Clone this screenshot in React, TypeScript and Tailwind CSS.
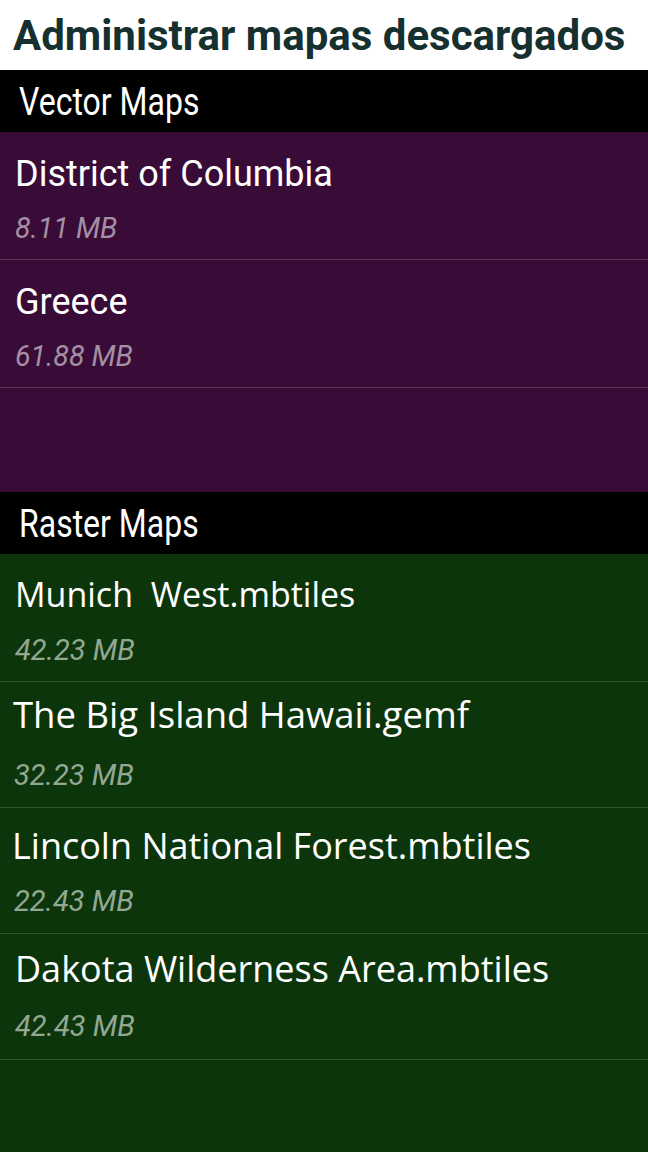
const vectorMaps = [
  { name: 'District of Columbia', size: '8.11 MB' },
  { name: 'Greece', size: '61.88 MB' },
];

// heights and offsets differ a little per row in the source screenshot
const rasterMaps = [
  { name: 'Munich  West.mbtiles', size: '42.23 MB', row: 'h-[128px] pl-[15px]', title: 'mt-[19px] text-[34px] leading-[42px]', sub: 'mt-[18px] pl-0' },
  { name: 'The Big Island Hawaii.gemf', size: '32.23 MB', row: 'h-[126px] pl-[13px]', title: 'mt-[10px] text-[36.5px] leading-[44px]', sub: 'mt-[22px] pl-[1px]' },
  { name: 'Lincoln National Forest.mbtiles', size: '22.43 MB', row: 'h-[126px] pl-[12px]', title: 'mt-[16px] text-[36px] leading-[44px]', sub: 'mt-[16px] pl-[2px]' },
  { name: 'Dakota Wilderness Area.mbtiles', size: '42.43 MB', row: 'h-[126px] pl-[15px]', title: 'mt-[13px] text-[36px] leading-[44px]', sub: 'mt-[18px] pl-0' },
];

function SectionHeader({ title }: { title: string }) {
  return (
    <div className="flex h-[62px] items-center bg-black pl-[19px] pt-[2px]">
      <span className="inline-block origin-left scale-y-[1.22] text-[32px] leading-[36px] text-white">
        {title}
      </span>
    </div>
  );
}

export default function App() {
  return (
    <div className="flex h-[1152px] w-[648px] flex-col overflow-hidden font-['Roboto',sans-serif]">
      <div className="flex h-[70px] items-center bg-white pl-[13px] pt-[2px]">
        <h1 className="text-[42px] font-bold leading-[48px] text-[#15302f]">
          Administrar mapas descargados
        </h1>
      </div>

      <SectionHeader title="Vector Maps" />
      <div className="h-[360px] bg-[#380c37]">
        {vectorMaps.map((m) => (
          <div
            key={m.name}
            className="flex h-[128px] flex-col border-b border-[#5a3459] pl-[15px]"
          >
            <span className="mt-[21px] text-[36px] leading-[42px] text-white">{m.name}</span>
            <span className="mt-[17px] text-[28.5px] italic leading-[34px] text-[#a48fa3]">
              {m.size}
            </span>
          </div>
        ))}
      </div>

      <SectionHeader title="Raster Maps" />
      <div className="flex-1 bg-[#0d350b]">
        {rasterMaps.map((m) => (
          <div
            key={m.name}
            className={`flex flex-col border-b border-[#30552d] ${m.row}`}
          >
            <span
              className={`whitespace-pre font-['Open_Sans',sans-serif] text-white ${m.title}`}
            >
              {m.name}
            </span>
            <span className={`text-[29px] italic leading-[34px] text-[#93a892] ${m.sub}`}>
              {m.size}
            </span>
          </div>
        ))}
      </div>
    </div>
  );
}
